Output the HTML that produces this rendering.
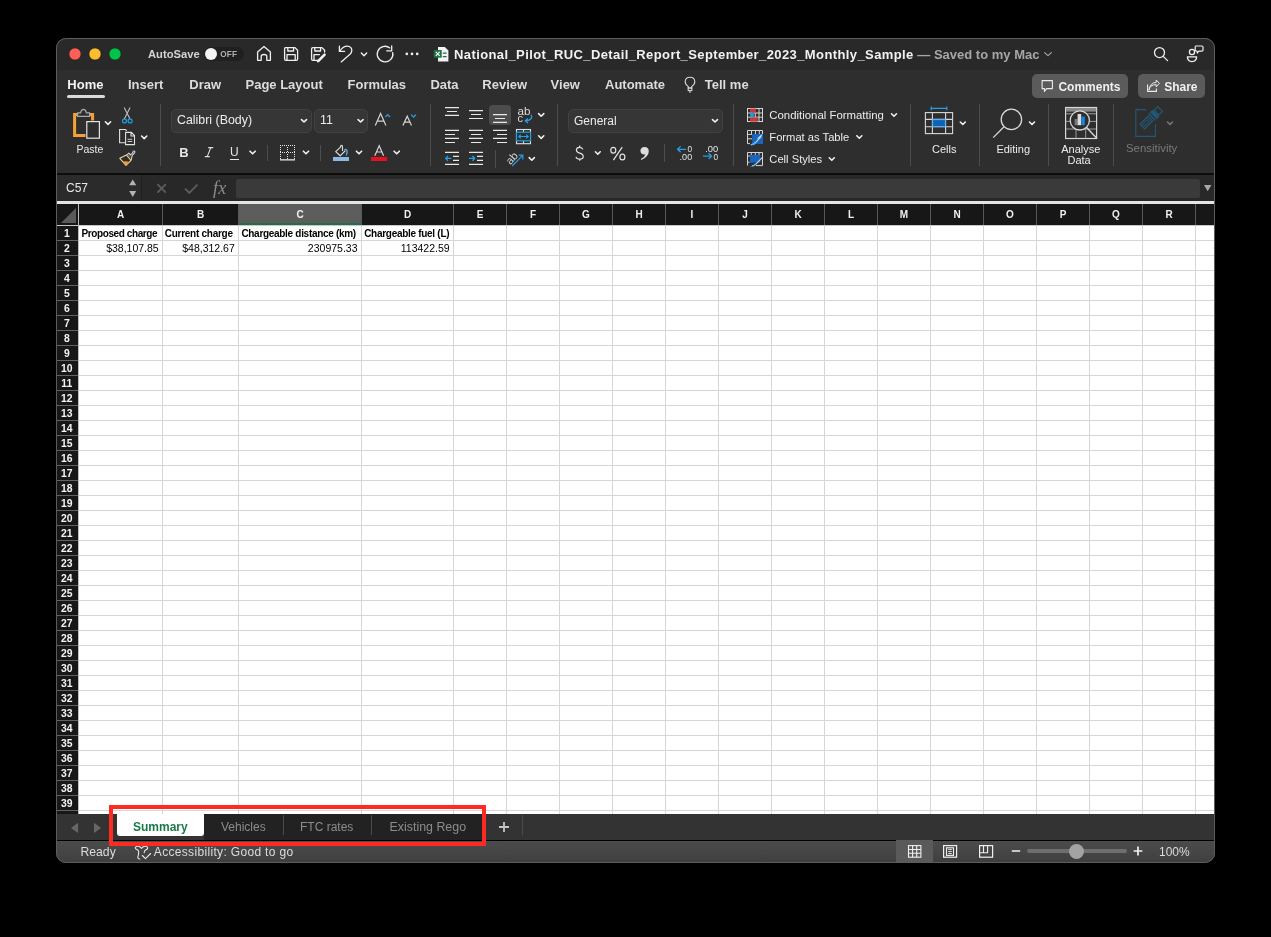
<!DOCTYPE html>
<html><head><meta charset="utf-8"><style>
*{margin:0;padding:0;box-sizing:border-box}
html,body{width:1271px;height:937px;background:#000;overflow:hidden;font-family:"Liberation Sans",sans-serif}
#win{position:absolute;left:56px;top:38px;width:1159px;height:825px;border-radius:10px;overflow:hidden;background:#2e2e2e}
#pg{will-change:transform;position:absolute;left:-56px;top:-38px;width:1271px;height:937px}
#pg div,#pg span,#pg svg{position:absolute;white-space:nowrap}
#frame{position:absolute;left:56px;top:38px;width:1159px;height:825px;border-radius:10px;border:1px solid #5c5c5c;pointer-events:none}
.titlebar{left:56px;top:38px;width:1159px;height:32px;background:#292929}
.colhdr{left:56px;top:204px;width:1159px;height:21px;background:#171717}
.ch{top:204px;height:21px;line-height:21px;text-align:center;color:#f0f0f0;font-weight:bold;font-size:10px}
.ch.sel{background:#5d5d5d;border-bottom:2px solid #1d7044}
.chsep{top:204px;width:1px;height:21px;background:#585858}
.vl{top:226px;width:1px;height:588px;background:#d6d6d6}
.hl{left:78px;width:1137px;height:1px;background:#d6d6d6}
.rh{left:56.3px;width:21px;height:14px;line-height:16.5px;text-align:center;color:#f4f4f4;font-weight:bold;font-size:10.4px}
.rhsep{left:57px;width:21px;height:1px;background:#626262}
.cellbg{left:78px;top:225px;width:1137px;height:589px;background:#fff}
.rhbg{left:56px;top:225px;width:22px;height:589px;background:#171717}
.t{color:#e6e6e6;font-size:13px;line-height:16px}

</style></head><body>
<div id="win"><div id="pg">
<div class="titlebar"></div>
<div class="t" style="left:148px;top:46px;font-size:11.2px;color:#d4d4d4;font-weight:bold;">AutoSave</div>
<div style="left:204px;top:47px;width:40px;height:14px;border-radius:7px;background:#202020"></div>
<div style="left:205px;top:47.8px;width:12px;height:12px;border-radius:6px;background:#f4f4f4"></div>
<div style="left:220.2px;top:51px;font-size:8.2px;line-height:8px;font-weight:bold;color:#b0b0b0;letter-spacing:0.2px">OFF</div>
<div style="left:454px;top:47px;font-size:13px;line-height:16px;font-weight:bold;color:#f2f2f2;letter-spacing:0.4px">National_Pilot_RUC_Detail_Report_September_2023_Monthly_Sample<span style="position:static;color:#a6a6a6;letter-spacing:0"> — Saved to my Mac</span></div>

<div style="left:56px;top:70px;width:1159px;height:103px;background:#2e2e2e"></div>
<div style="left:56px;top:173px;width:1159px;height:2px;background:#0d0d0d"></div>
<div style="left:67.3px;top:78.20px;font-size:13px;line-height:13px;font-weight:bold;color:#f2f2f2;letter-spacing:0px;">Home</div>
<div style="left:128px;top:78.20px;font-size:13px;line-height:13px;font-weight:bold;color:#dcdcdc;letter-spacing:0px;">Insert</div>
<div style="left:189.3px;top:78.20px;font-size:13px;line-height:13px;font-weight:bold;color:#dcdcdc;letter-spacing:0px;">Draw</div>
<div style="left:245.5px;top:78.20px;font-size:13px;line-height:13px;font-weight:bold;color:#dcdcdc;letter-spacing:0px;">Page Layout</div>
<div style="left:347.5px;top:78.20px;font-size:13px;line-height:13px;font-weight:bold;color:#dcdcdc;letter-spacing:0px;">Formulas</div>
<div style="left:430.4px;top:78.20px;font-size:13px;line-height:13px;font-weight:bold;color:#dcdcdc;letter-spacing:0px;">Data</div>
<div style="left:482.3px;top:78.20px;font-size:13px;line-height:13px;font-weight:bold;color:#dcdcdc;letter-spacing:0px;">Review</div>
<div style="left:550.6px;top:78.20px;font-size:13px;line-height:13px;font-weight:bold;color:#dcdcdc;letter-spacing:0px;">View</div>
<div style="left:605px;top:78.20px;font-size:13px;line-height:13px;font-weight:bold;color:#dcdcdc;letter-spacing:0px;">Automate</div>
<div style="left:704.8px;top:78.20px;font-size:13px;line-height:13px;font-weight:bold;color:#dcdcdc;letter-spacing:0px;">Tell me</div>
<div style="left:67px;top:95px;width:38px;height:3px;border-radius:1.5px;background:#dadada"></div>
<div style="left:1032px;top:74px;width:96px;height:24px;border-radius:5px;background:#5b5b5b"></div>
<div style="left:1138px;top:74px;width:67px;height:24px;border-radius:5px;background:#5b5b5b"></div>
<div style="left:1058.4px;top:80.74px;font-size:12px;line-height:12px;font-weight:bold;color:#f0f0f0;letter-spacing:0px;">Comments</div>
<div style="left:1164.2px;top:80.74px;font-size:12px;line-height:12px;font-weight:bold;color:#f0f0f0;letter-spacing:0px;">Share</div>
<div style="left:160px;top:104px;width:1px;height:62px;background:#4d4d4d"></div>
<div style="left:430px;top:104px;width:1px;height:62px;background:#4d4d4d"></div>
<div style="left:557px;top:104px;width:1px;height:62px;background:#4d4d4d"></div>
<div style="left:733px;top:104px;width:1px;height:62px;background:#4d4d4d"></div>
<div style="left:910px;top:104px;width:1px;height:62px;background:#4d4d4d"></div>
<div style="left:979px;top:104px;width:1px;height:62px;background:#4d4d4d"></div>
<div style="left:1048px;top:104px;width:1px;height:62px;background:#4d4d4d"></div>
<div style="left:1113px;top:104px;width:1px;height:62px;background:#4d4d4d"></div>
<div style="left:267px;top:145px;width:1px;height:16px;background:#4d4d4d"></div>
<div style="left:320px;top:145px;width:1px;height:16px;background:#4d4d4d"></div>
<div style="left:495px;top:150px;width:1px;height:18px;background:#4d4d4d"></div>
<div style="left:664px;top:144px;width:1px;height:18px;background:#4d4d4d"></div>
<div style="left:171px;top:109px;width:141px;height:24px;border-radius:5px;background:#363636;border:1px solid #414141"></div>
<div style="left:314px;top:109px;width:54px;height:24px;border-radius:5px;background:#363636;border:1px solid #414141"></div>
<div style="left:568px;top:109px;width:155px;height:24px;border-radius:5px;background:#363636;border:1px solid #414141"></div>
<div style="left:177px;top:114.40px;font-size:12.4px;line-height:12.4px;font-weight:normal;color:#ececec;letter-spacing:0px;">Calibri (Body)</div>
<div style="left:320px;top:114.40px;font-size:12.4px;line-height:12.4px;font-weight:normal;color:#ececec;letter-spacing:0px;">11</div>
<div style="left:574px;top:114.74px;font-size:12px;line-height:12px;font-weight:normal;color:#ececec;letter-spacing:0px;">General</div>
<div style="left:76.5px;top:143.81px;font-size:10.5px;line-height:10.5px;font-weight:normal;color:#e8e8e8;letter-spacing:0px;">Paste</div>
<div style="left:769.3px;top:109.55px;font-size:11.4px;line-height:11.4px;font-weight:normal;color:#ececec;letter-spacing:0px;">Conditional Formatting</div>
<div style="left:769.3px;top:131.72px;font-size:11.2px;line-height:11.2px;font-weight:normal;color:#ececec;letter-spacing:0px;">Format as Table</div>
<div style="left:769.3px;top:153.52px;font-size:11.2px;line-height:11.2px;font-weight:normal;color:#ececec;letter-spacing:0px;">Cell Styles</div>
<div style="left:932px;top:143.79px;font-size:11px;line-height:11px;font-weight:normal;color:#ececec;letter-spacing:0px;">Cells</div>
<div style="left:996.4px;top:143.79px;font-size:11px;line-height:11px;font-weight:normal;color:#ececec;letter-spacing:0px;">Editing</div>
<div style="left:1061.2px;top:143.79px;font-size:11px;line-height:11px;font-weight:normal;color:#ececec;letter-spacing:0px;">Analyse</div>
<div style="left:1067.5px;top:155.39px;font-size:11px;line-height:11px;font-weight:normal;color:#ececec;letter-spacing:0px;">Data</div>
<div style="left:1126px;top:143.45px;font-size:11.4px;line-height:11.4px;font-weight:normal;color:#7a7a7a;letter-spacing:0px;">Sensitivity</div>
<div style="left:179.2px;top:145.80px;font-size:13px;line-height:13px;font-weight:bold;color:#e6e6e6;letter-spacing:0px;">B</div>
<div style="left:230px;top:146.44px;font-size:12px;line-height:12px;font-weight:normal;color:#e6e6e6;letter-spacing:0px;">U</div>
<div style="left:230px;top:158.5px;width:9px;height:1px;background:#e6e6e6"></div>
<div style="left:56px;top:175px;width:1159px;height:26px;background:#282828"></div>
<div style="left:56px;top:175px;width:86px;height:26px;background:#2b2b2b"></div>
<div style="left:141px;top:175px;width:1px;height:26px;background:#1f1f1f"></div>
<div style="left:66px;top:181px;font-size:12px;line-height:14px;color:#e8e8e8">C57</div>
<div style="left:236px;top:179px;width:964px;height:19px;border-radius:2px;background:#3a3a3a"></div>
<div style="left:56px;top:201px;width:1159px;height:3px;background:#e4e4e4"></div>
<div style="left:213px;top:177.5px;font:italic 18px/20px 'Liberation Serif',serif;color:#8c8c8c;letter-spacing:0.3px">fx</div>

<div class="cellbg"></div><div class="rhbg"></div><div class="colhdr"></div>
<div class="ch" style="left:79px;width:83px">A</div>
<div class="chsep" style="left:78px"></div>
<div class="ch" style="left:163px;width:75px">B</div>
<div class="chsep" style="left:162px"></div>
<div class="ch sel" style="left:239px;width:122px">C</div>
<div class="chsep" style="left:238px"></div>
<div class="ch" style="left:362px;width:91px">D</div>
<div class="chsep" style="left:361px"></div>
<div class="ch" style="left:454px;width:52px">E</div>
<div class="chsep" style="left:453px"></div>
<div class="ch" style="left:507px;width:52px">F</div>
<div class="chsep" style="left:506px"></div>
<div class="ch" style="left:560px;width:52px">G</div>
<div class="chsep" style="left:559px"></div>
<div class="ch" style="left:613px;width:52px">H</div>
<div class="chsep" style="left:612px"></div>
<div class="ch" style="left:666px;width:52px">I</div>
<div class="chsep" style="left:665px"></div>
<div class="ch" style="left:719px;width:52px">J</div>
<div class="chsep" style="left:718px"></div>
<div class="ch" style="left:772px;width:52px">K</div>
<div class="chsep" style="left:771px"></div>
<div class="ch" style="left:825px;width:52px">L</div>
<div class="chsep" style="left:824px"></div>
<div class="ch" style="left:878px;width:52px">M</div>
<div class="chsep" style="left:877px"></div>
<div class="ch" style="left:931px;width:52px">N</div>
<div class="chsep" style="left:930px"></div>
<div class="ch" style="left:984px;width:52px">O</div>
<div class="chsep" style="left:983px"></div>
<div class="ch" style="left:1037px;width:52px">P</div>
<div class="chsep" style="left:1036px"></div>
<div class="ch" style="left:1090px;width:52px">Q</div>
<div class="chsep" style="left:1089px"></div>
<div class="ch" style="left:1143px;width:52px">R</div>
<div class="chsep" style="left:1142px"></div>
<div class="ch" style="left:1196px;width:52px">S</div>
<div class="chsep" style="left:1195px"></div>
<div class="vl" style="left:162px"></div>
<div class="vl" style="left:238px"></div>
<div class="vl" style="left:361px"></div>
<div class="vl" style="left:453px"></div>
<div class="vl" style="left:506px"></div>
<div class="vl" style="left:559px"></div>
<div class="vl" style="left:612px"></div>
<div class="vl" style="left:665px"></div>
<div class="vl" style="left:718px"></div>
<div class="vl" style="left:771px"></div>
<div class="vl" style="left:824px"></div>
<div class="vl" style="left:877px"></div>
<div class="vl" style="left:930px"></div>
<div class="vl" style="left:983px"></div>
<div class="vl" style="left:1036px"></div>
<div class="vl" style="left:1089px"></div>
<div class="vl" style="left:1142px"></div>
<div class="vl" style="left:1195px"></div>
<div class="hl" style="top:225px"></div>
<div class="hl" style="top:240px"></div>
<div class="hl" style="top:255px"></div>
<div class="hl" style="top:270px"></div>
<div class="hl" style="top:285px"></div>
<div class="hl" style="top:300px"></div>
<div class="hl" style="top:315px"></div>
<div class="hl" style="top:330px"></div>
<div class="hl" style="top:345px"></div>
<div class="hl" style="top:360px"></div>
<div class="hl" style="top:375px"></div>
<div class="hl" style="top:390px"></div>
<div class="hl" style="top:405px"></div>
<div class="hl" style="top:420px"></div>
<div class="hl" style="top:435px"></div>
<div class="hl" style="top:450px"></div>
<div class="hl" style="top:465px"></div>
<div class="hl" style="top:480px"></div>
<div class="hl" style="top:495px"></div>
<div class="hl" style="top:510px"></div>
<div class="hl" style="top:525px"></div>
<div class="hl" style="top:540px"></div>
<div class="hl" style="top:555px"></div>
<div class="hl" style="top:570px"></div>
<div class="hl" style="top:585px"></div>
<div class="hl" style="top:600px"></div>
<div class="hl" style="top:615px"></div>
<div class="hl" style="top:630px"></div>
<div class="hl" style="top:645px"></div>
<div class="hl" style="top:660px"></div>
<div class="hl" style="top:675px"></div>
<div class="hl" style="top:690px"></div>
<div class="hl" style="top:705px"></div>
<div class="hl" style="top:720px"></div>
<div class="hl" style="top:735px"></div>
<div class="hl" style="top:750px"></div>
<div class="hl" style="top:765px"></div>
<div class="hl" style="top:780px"></div>
<div class="hl" style="top:795px"></div>
<div class="hl" style="top:810px"></div>
<div class="rh" style="top:226px">1</div>
<div class="rhsep" style="top:240px"></div>
<div class="rh" style="top:241px">2</div>
<div class="rhsep" style="top:255px"></div>
<div class="rh" style="top:256px">3</div>
<div class="rhsep" style="top:270px"></div>
<div class="rh" style="top:271px">4</div>
<div class="rhsep" style="top:285px"></div>
<div class="rh" style="top:286px">5</div>
<div class="rhsep" style="top:300px"></div>
<div class="rh" style="top:301px">6</div>
<div class="rhsep" style="top:315px"></div>
<div class="rh" style="top:316px">7</div>
<div class="rhsep" style="top:330px"></div>
<div class="rh" style="top:331px">8</div>
<div class="rhsep" style="top:345px"></div>
<div class="rh" style="top:346px">9</div>
<div class="rhsep" style="top:360px"></div>
<div class="rh" style="top:361px">10</div>
<div class="rhsep" style="top:375px"></div>
<div class="rh" style="top:376px">11</div>
<div class="rhsep" style="top:390px"></div>
<div class="rh" style="top:391px">12</div>
<div class="rhsep" style="top:405px"></div>
<div class="rh" style="top:406px">13</div>
<div class="rhsep" style="top:420px"></div>
<div class="rh" style="top:421px">14</div>
<div class="rhsep" style="top:435px"></div>
<div class="rh" style="top:436px">15</div>
<div class="rhsep" style="top:450px"></div>
<div class="rh" style="top:451px">16</div>
<div class="rhsep" style="top:465px"></div>
<div class="rh" style="top:466px">17</div>
<div class="rhsep" style="top:480px"></div>
<div class="rh" style="top:481px">18</div>
<div class="rhsep" style="top:495px"></div>
<div class="rh" style="top:496px">19</div>
<div class="rhsep" style="top:510px"></div>
<div class="rh" style="top:511px">20</div>
<div class="rhsep" style="top:525px"></div>
<div class="rh" style="top:526px">21</div>
<div class="rhsep" style="top:540px"></div>
<div class="rh" style="top:541px">22</div>
<div class="rhsep" style="top:555px"></div>
<div class="rh" style="top:556px">23</div>
<div class="rhsep" style="top:570px"></div>
<div class="rh" style="top:571px">24</div>
<div class="rhsep" style="top:585px"></div>
<div class="rh" style="top:586px">25</div>
<div class="rhsep" style="top:600px"></div>
<div class="rh" style="top:601px">26</div>
<div class="rhsep" style="top:615px"></div>
<div class="rh" style="top:616px">27</div>
<div class="rhsep" style="top:630px"></div>
<div class="rh" style="top:631px">28</div>
<div class="rhsep" style="top:645px"></div>
<div class="rh" style="top:646px">29</div>
<div class="rhsep" style="top:660px"></div>
<div class="rh" style="top:661px">30</div>
<div class="rhsep" style="top:675px"></div>
<div class="rh" style="top:676px">31</div>
<div class="rhsep" style="top:690px"></div>
<div class="rh" style="top:691px">32</div>
<div class="rhsep" style="top:705px"></div>
<div class="rh" style="top:706px">33</div>
<div class="rhsep" style="top:720px"></div>
<div class="rh" style="top:721px">34</div>
<div class="rhsep" style="top:735px"></div>
<div class="rh" style="top:736px">35</div>
<div class="rhsep" style="top:750px"></div>
<div class="rh" style="top:751px">36</div>
<div class="rhsep" style="top:765px"></div>
<div class="rh" style="top:766px">37</div>
<div class="rhsep" style="top:780px"></div>
<div class="rh" style="top:781px">38</div>
<div class="rhsep" style="top:795px"></div>
<div class="rh" style="top:796px">39</div>
<div class="rhsep" style="top:810px"></div>
<div style="left:56px;top:225px;width:1159px;height:1px;background:#c8c8c8"></div>
<div style="left:78px;top:204px;width:1px;height:610px;background:#bdbdbd"></div>
<div style="left:81.5px;top:228.53px;font-size:10px;line-height:10px;font-weight:bold;color:#000;letter-spacing:-0.4px;">Proposed charge</div>
<div style="left:164.7px;top:228.53px;font-size:10px;line-height:10px;font-weight:bold;color:#000;letter-spacing:-0.26px;">Current charge</div>
<div style="left:241.4px;top:228.53px;font-size:10px;line-height:10px;font-weight:bold;color:#000;letter-spacing:-0.3px;">Chargeable distance (km)</div>
<div style="left:364.2px;top:228.53px;font-size:10px;line-height:10px;font-weight:bold;color:#000;letter-spacing:-0.29px;">Chargeable fuel (L)</div>
<div style="right:1112.3px;top:242.91px;font-size:10.5px;line-height:10.5px;font-weight:normal;color:#000;letter-spacing:0px">$38,107.85</div>
<div style="right:1036.2px;top:242.91px;font-size:10.5px;line-height:10.5px;font-weight:normal;color:#000;letter-spacing:0px">$48,312.67</div>
<div style="right:913.5px;top:242.91px;font-size:10.5px;line-height:10.5px;font-weight:normal;color:#000;letter-spacing:0px">230975.33</div>
<div style="right:821.4px;top:242.91px;font-size:10.5px;line-height:10.5px;font-weight:normal;color:#000;letter-spacing:0px">113422.59</div>
<div style="left:56px;top:814px;width:1159px;height:26px;background:#333333"></div>
<div style="left:204px;top:814px;width:282px;height:26px;background:#222222"></div>
<div style="left:117px;top:814px;width:87px;height:22px;background:#ffffff;border-radius:0 0 3px 3px"></div>
<div style="left:56px;top:840px;width:1159px;height:1px;background:#000"></div>
<div style="left:56px;top:841px;width:1159px;height:22px;background:linear-gradient(#505050 0,#4a4a4a 1px,#464646 50%,#3e3e3e 100%)"></div>
<div style="left:133px;top:819.5px;font-size:12px;line-height:14px;font-weight:bold;color:#1a7a46">Summary</div>
<div style="left:221px;top:819.5px;font-size:12px;line-height:14px;color:#8c8c8c">Vehicles</div>
<div style="left:300px;top:819.5px;font-size:12px;line-height:14px;color:#8c8c8c">FTC rates</div>
<div style="left:389.6px;top:819.5px;font-size:12.4px;line-height:14px;color:#8c8c8c">Existing Rego</div>
<div style="left:283px;top:815px;width:1px;height:20px;background:#4a4a4a"></div>
<div style="left:371px;top:815px;width:1px;height:20px;background:#4a4a4a"></div>
<div style="left:522px;top:815px;width:1px;height:20px;background:#4a4a4a"></div>
<div style="left:80.5px;top:845px;font-size:12.2px;line-height:14px;color:#dcdcdc">Ready</div>
<div style="left:153.8px;top:845px;font-size:12px;line-height:14px;color:#dcdcdc;letter-spacing:0.33px">Accessibility: Good to go</div>
<div style="left:896px;top:840px;width:37px;height:22px;background:#5a5a5a"></div>
<div style="left:1159px;top:845px;font-size:12px;line-height:14px;color:#dcdcdc">100%</div>
<div style="left:1027px;top:849px;width:100px;height:4px;border-radius:2px;background:#6e6e6e"></div>
<div style="left:1069px;top:843.5px;width:15px;height:15px;border-radius:8px;background:#a3a3a3"></div>

<svg id="ico" width="1271" height="937" viewBox="0 0 1271 937" style="left:0;top:0">
<g id="traffic">
<circle cx="75" cy="54" r="6" fill="#ff5f57" stroke="#1a1a1a" stroke-width="0.5"/>
<circle cx="95" cy="54" r="6" fill="#febc2e" stroke="#1a1a1a" stroke-width="0.5"/>
<circle cx="115" cy="54" r="6" fill="#00c34a" stroke="#1a1a1a" stroke-width="0.5"/>
</g>
<g fill="none" stroke="#f0f0f0" stroke-width="1.3" stroke-linejoin="round" stroke-linecap="round">
<!-- home -->
<path d="M257.6 60.3 V52 L264 46.6 L270.4 52 V60.3 H266.8 V56.5 Q266.8 54.5 264 54.5 Q261.2 54.5 261.2 56.5 V60.3 Z"/>
<!-- save -->
<path d="M285.5 47.6 H295 L297.6 50.2 V59 Q297.6 60.4 296.2 60.4 H285.9 Q284.6 60.4 284.6 59 V48.9 Q284.6 47.6 285.5 47.6 Z"/>
<path d="M287.8 47.8 V51 H293.6 V47.8"/>
<path d="M287 60.2 V54.6 H295.2 V60.2"/>
<!-- save as -->
<path d="M318 60.4 H312.9 Q311.6 60.4 311.6 59 V48.9 Q311.6 47.6 312.9 47.6 H322 L324.6 50.2 V52"/>
<path d="M314.8 47.8 V51 H320.6 V47.8"/>
<path d="M314 60.2 V54.6 H319.5"/>
<path d="M318.2 61.2 L324.6 54.6" stroke-width="2.6"/>
<!-- undo -->
<path d="M339.4 46.2 V51.4 H344.6"/>
<path d="M339.7 51.1 Q343.4 46.1 347.2 46.2 Q351.8 46.5 351.8 50.6 Q351.7 52.6 350 54.2 L341.2 61.9"/>
<path d="M361.3 52.9 L364 55.7 L366.7 52.9" stroke-width="1.4"/>
<!-- redo -->
<path d="M389.8 47.9 A7.8 7.8 0 1 0 392.7 52.6"/>
<path d="M386.7 50.8 H391.7 V45.8"/>
<!-- search -->
<circle cx="1159.5" cy="52.6" r="5"/>
<path d="M1163.2 56.4 L1167.6 60.6"/>
<!-- title chevron -->
<path d="M1044.6 52.6 L1048 55.6 L1051.4 52.6" stroke="#a6a6a6" stroke-width="1.2"/>
<!-- people/share -->
<circle cx="1192" cy="52" r="2.6"/>
<path d="M1187.4 56.8 H1196.6 Q1196.6 61.6 1192 61.6 Q1187.4 61.6 1187.4 56.8 Z"/>
<path d="M1195.8 46 H1201.8 Q1203 46 1203 47.2 V50 Q1203 51.2 1201.8 51.2 H1198.8 L1197.4 53 L1197 51.2 Q1195.2 51.2 1195.2 50 V47.2 Q1195.2 46 1195.8 46 Z" stroke-width="1.2"/>
</g>
<g fill="#f0f0f0">
<circle cx="406.8" cy="53.9" r="1.3"/><circle cx="412" cy="53.9" r="1.3"/><circle cx="417.2" cy="53.9" r="1.3"/>
</g>
<!-- excel icon -->
<g>
<path d="M438 46.9 H444.8 L448.4 50.5 V61.4 H438 Z" fill="#f4f4f4"/>
<path d="M442.8 53.2 H446.6 M442.8 56.6 H446.6" stroke="#1d7345" stroke-width="1.2"/>
<rect x="433.8" y="50" width="7.9" height="7.7" fill="#1d7345"/>
<path d="M435.8 51.9 L439.7 55.8 M439.7 51.9 L435.8 55.8" stroke="#fff" stroke-width="1.1"/>
</g>

<!-- clipboard -->
<path d="M80 114.6 H74.6 V135.4 H85.5" fill="none" stroke="#f4a236" stroke-width="3"/>
<path d="M87.6 114.6 H92.6 V120.5" fill="none" stroke="#f4a236" stroke-width="3"/>
<path d="M77.6 116.3 V112.8 H80.6 Q81.2 109.4 83.5 109.4 Q85.8 109.4 86.4 112.8 H89.6 V116.3 Z" fill="#2e2e2e" stroke="#a9a9a9" stroke-width="1.2"/>
<rect x="86.8" y="121.6" width="12.6" height="16.6" fill="#2e2e2e" stroke="#e4e4e4" stroke-width="1.2"/>
<!-- scissors -->
<path d="M124.2 107.4 L130 119 M130.1 107.4 L124.3 119" fill="none" stroke="#bdbdbd" stroke-width="1.1"/>
<rect x="122.6" y="119.2" width="3.8" height="3.6" rx="1.2" fill="none" stroke="#1c9fe3" stroke-width="1.3"/>
<rect x="128.2" y="119.2" width="3.8" height="3.6" rx="1.2" fill="none" stroke="#1c9fe3" stroke-width="1.3"/>
<!-- copy -->
<path d="M125 142.8 H119.6 V129.5 H125.5 L126.8 130.8" fill="none" stroke="#e0e0e0" stroke-width="1.1"/>
<path d="M125.6 144.6 V132.4 H131.4 L134.5 135.5 V144.6 Z M131 132.6 V136 H134.4" fill="none" stroke="#e0e0e0" stroke-width="1.1"/>
<path d="M127.6 139.3 H132.2 M127.6 141.5 H132.2" stroke="#e0e0e0" stroke-width="0.9"/>
<!-- format painter -->
<path d="M119.8 158.3 L126.4 155 L131 160.4 L126 165.3 Z" fill="none" stroke="#f6d58c" stroke-width="1.1" stroke-linejoin="round"/>
<path d="M122.8 161.6 Q126.4 160.8 129.6 162 L126 165.1 Z" fill="#ee982c"/>
<path d="M126.6 155.2 L128.8 153.2 L130.6 155 L133 152.4 Q132.6 150.8 134.2 151 Q135.4 151.6 134.6 152.8 L132.2 155.4 L131.2 160.2" fill="none" stroke="#d4d4d4" stroke-width="1.1" stroke-linejoin="round"/>
<path d="M128.4 155.4 L130.4 157.6" stroke="#d4d4d4" stroke-width="0.9" stroke-dasharray="0.9 0.7"/>
<!-- chevrons (ribbon) -->
<g fill="none" stroke="#f0f0f0" stroke-width="1.6" stroke-linecap="round" stroke-linejoin="round">
<path d="M105.4 121.8 L108 124.4 L110.6 121.8"/>
<path d="M141.6 136 L144.2 138.6 L146.8 136"/>
<path d="M301.5 119.6 L304 122 L306.5 119.6"/>
<path d="M358.1 119.6 L360.6 122 L363.1 119.6"/>
<path d="M712.5 119.6 L715 122 L717.5 119.6"/>
<path d="M250 151.2 L252.6 153.8 L255.2 151.2"/>
<path d="M303.4 151.2 L306 153.8 L308.6 151.2"/>
<path d="M356.4 151.2 L359 153.8 L361.6 151.2"/>
<path d="M394.1 151.2 L396.7 153.8 L399.3 151.2"/>
<path d="M538.6 113.6 L541.2 116.2 L543.8 113.6"/>
<path d="M538.6 135.8 L541.2 138.4 L543.8 135.8"/>
<path d="M529.2 157.6 L531.8 160.2 L534.4 157.6"/>
<path d="M595.4 151.8 L597.8 154.2 L600.2 151.8"/>
<path d="M891.5 113.8 L894 116.3 L896.5 113.8"/>
<path d="M856.8 135.8 L859.3 138.3 L861.8 135.8"/>
<path d="M829.3 157.8 L831.8 160.3 L834.3 157.8"/>
<path d="M960.3 122 L962.8 124.5 L965.3 122"/>
<path d="M1029.5 122 L1032 124.5 L1034.5 122"/>
<path d="M1167.5 122 L1170 124.5 L1172.5 122" stroke="#777"/>
</g>

<!-- grow/shrink font -->
<g fill="none" stroke="#d4d4d4" stroke-width="1.2" stroke-linejoin="miter">
<path d="M375.3 125.6 L380.6 113.6 L385.9 125.6 M377.3 121.2 H383.9"/>
<path d="M402.9 125.6 L407.2 116.2 L411.5 125.6 M404.5 122.2 H409.9"/>
<!-- font color A -->
<path d="M374.8 155.8 L379.2 145.8 L383.6 155.8 M376.5 152 H381.9"/>
</g>
<g fill="none" stroke="#22a0e4" stroke-width="1.3">
<path d="M385.4 117 L387.7 114.6 L390 117"/>
<path d="M411.2 114.6 L413.6 117 L416 114.6"/>
</g>
<rect x="371" y="157" width="16" height="4" fill="#e8101e"/>
<rect x="333" y="157" width="16" height="4" fill="#8cbae8"/>
<!-- fill bucket -->
<path d="M342.5 150.4 V147.1 Q342.5 145.4 341.5 145.4 Q340.5 145.4 340.5 147.1 L335.7 151.6 L340.2 155.8 L345 151" fill="none" stroke="#d8d8d8" stroke-width="1.2" stroke-linejoin="round" stroke-linecap="round"/>
<path d="M344.8 149.5 Q346.8 148.8 347.1 151.4 Q347.2 153.4 346.4 155" fill="none" stroke="#5ab0ea" stroke-width="1.3" stroke-linecap="round"/>
<!-- borders -->
<g fill="#e6e6e6">
<path d="M280 145 h1v1h-1z M282 145 h1v1h-1z M284 145 h1v1h-1z M286 145 h1v1h-1z M288 145 h1v1h-1z M290 145 h1v1h-1z M292 145 h1v1h-1z M294 145 h1v1h-1z"/>
<path d="M280 152 h1v1h-1z M282 152 h1v1h-1z M284 152 h1v1h-1z M286 152 h1v1h-1z M288 152 h1v1h-1z M290 152 h1v1h-1z M292 152 h1v1h-1z M294 152 h1v1h-1z"/>
<path d="M280 147 h1v1h-1z M280 149 h1v1h-1z M280 151 h1v1h-1z M280 154 h1v1h-1z M280 156 h1v1h-1z M280 158 h1v1h-1z"/>
<path d="M294 147 h1v1h-1z M294 149 h1v1h-1z M294 151 h1v1h-1z M294 154 h1v1h-1z M294 156 h1v1h-1z M294 158 h1v1h-1z"/>
<path d="M287 147 h1v1h-1z M287 149 h1v1h-1z M287 151 h1v1h-1z M287 154 h1v1h-1z M287 156 h1v1h-1z M287 158 h1v1h-1z"/>
<rect x="280" y="159.2" width="15" height="1.3"/>
</g>
<!-- alignment -->
<rect x="489" y="105" width="22" height="20" rx="3.5" fill="#4c4c4c"/>
<g stroke="#e8e8e8" stroke-width="1.2" fill="none">
<path d="M445 107.6 H459 M447 111.5 H457 M445 115.4 H459"/>
<path d="M469 110.6 H483 M471 114.5 H481 M469 118.5 H483"/>
<path d="M493 114.6 H507 M495 118.5 H505 M493 122.4 H507"/>
<path d="M445 130.4 H459 M445 134.5 H455 M445 138.4 H459 M445 142.5 H455"/>
<path d="M469 130.4 H483 M471 134.5 H481 M469 138.4 H483 M471 142.5 H481"/>
<path d="M493 130.4 H507 M497 134.5 H507 M493 138.4 H507 M497 142.5 H507"/>
<path d="M445 152.3 H459 M453 156.4 H459 M453 160.4 H459 M445 164.4 H459"/>
<path d="M469 152.3 H483 M477 156.4 H483 M477 160.4 H483 M469 164.4 H483"/>
</g>
<g stroke="#22a0e4" stroke-width="1.3" fill="none" stroke-linejoin="round">
<path d="M445.6 158.4 H451.4 M448 156 L445.6 158.4 L448 160.8"/>
<path d="M469 158.4 H474.8 M472.4 156 L474.8 158.4 L472.4 160.8"/>
</g>
<!-- wrap text -->
<text x="517.6" y="115" font-family="Liberation Sans" font-size="11" fill="#dcdcdc" textLength="13" lengthAdjust="spacingAndGlyphs">ab</text>
<text x="517.6" y="122.4" font-family="Liberation Sans" font-size="11" fill="#dcdcdc">c</text>
<path d="M531.2 114.8 Q533.4 119.6 526 120.8 M528 118.4 L525.2 120.8 L528 123" fill="none" stroke="#22a0e4" stroke-width="1.3" stroke-linejoin="round"/>
<!-- merge -->
<rect x="516.5" y="129.5" width="14" height="14.2" fill="none" stroke="#e0e0e0" stroke-width="1.1"/>
<path d="M523.5 129.5 V132.2 M523.5 140.8 V143.6" stroke="#e0e0e0" stroke-width="1.1"/>
<rect x="516.5" y="132.2" width="14" height="8.6" fill="#2e2e2e" stroke="#22a0e4" stroke-width="1.2"/>
<path d="M519 136.5 H528 M520.8 134.6 L518.8 136.5 L520.8 138.4 M526.2 134.6 L528.2 136.5 L526.2 138.4" fill="none" stroke="#22a0e4" stroke-width="1.2"/>
<!-- orientation -->
<text x="0" y="0" font-family="Liberation Sans" font-size="11" fill="#d6d6d6" transform="translate(510.4 165.2) rotate(-48)">ab</text>
<path d="M512.2 166 L522.6 155.4 M518.6 155.2 H522.8 V159.4" fill="none" stroke="#22a0e4" stroke-width="1.2"/>
<!-- number -->
<g fill="none" stroke="#22a0e4" stroke-width="1.3" stroke-linejoin="round">
<path d="M677.6 149.3 H686 M680.6 146.4 L677.6 149.3 L680.6 152.2"/>
<path d="M703 156.2 H711.6 M708.6 153.3 L711.6 156.2 L708.6 159.1"/>
</g>
<g font-family="Liberation Sans" font-size="9.3" fill="#e4e4e4">
<text x="687.6" y="151.8" textLength="4.6" lengthAdjust="spacingAndGlyphs">0</text>
<text x="679.6" y="160.1" textLength="12.6" lengthAdjust="spacingAndGlyphs">.00</text>
<text x="705.2" y="151.8" textLength="13" lengthAdjust="spacingAndGlyphs">.00</text>
<text x="713.6" y="160.1" textLength="4.6" lengthAdjust="spacingAndGlyphs">0</text>
</g>
<path d="M644.6 146.9 Q648.8 146.9 648.8 151.4 Q648.6 156.6 641.4 159.9 L640.8 158.9 Q644.8 156.6 645.4 154.4 Q640.4 154.8 640.4 150.8 Q640.6 146.9 644.6 146.9 Z" fill="#dcdcdc"/>

<!-- conditional formatting -->
<g fill="none" stroke="#d4d4d4" stroke-width="1">
<rect x="747.5" y="108.5" width="15" height="13"/>
<path d="M751.3 108.5 V121.5 M755.3 108.5 V121.5 M759 108.5 V121.5 M747.5 113 H762.5 M747.5 117.2 H762.5"/>
</g>
<rect x="750" y="108.6" width="6" height="4" fill="#c8363e"/>
<rect x="750" y="117.4" width="7.8" height="4.2" fill="#c8363e"/>
<rect x="750.2" y="112.8" width="3.6" height="4.4" fill="#1a9ee0"/>
<!-- format as table -->
<g fill="none" stroke="#d4d4d4" stroke-width="1">
<path d="M762.5 130.5 H747.5 V143.6 H750 M747.5 134.4 H752 M747.5 138.8 H752 M751.5 130.5 V134 M755.5 130.5 V134 M759.3 130.5 V134 M762.5 130.5 V134.5"/>
</g>
<rect x="752.2" y="134" width="10.8" height="10" fill="#1766c2"/>
<path d="M757.6 138.6 L762 134.6 M751 144.6 Q753.6 144.8 755.4 142.6 L761.4 136.4" fill="none" stroke="#cfd8e0" stroke-width="1.1"/>
<path d="M749.6 144.8 Q753 145 754.8 141.8 L756 143 Q754 146.2 749.6 144.8 Z" fill="#4fb3ea"/>
<!-- cell styles -->
<g fill="none" stroke="#d4d4d4" stroke-width="1">
<path d="M747.5 165.6 V152.5 H762.5 V165.6 H756 M747.5 156 H750 M747.5 162.2 H749.6 M751.3 152.5 V155 M755.3 152.5 V155 M759 152.5 V155"/>
</g>
<rect x="750" y="155" width="10.3" height="7.6" fill="#1766c2"/>
<path d="M752 165.8 Q754.6 166 756.4 163.6 L762.6 157.2" fill="none" stroke="#cfd8e0" stroke-width="1.1"/>
<path d="M749.6 166.4 Q753 166.6 754.8 163.4 L756 164.6 Q754 167.8 749.6 166.4 Z" fill="#4fb3ea"/>
<!-- cells -->
<g fill="none" stroke="#d8d8d8" stroke-width="1.1">
<rect x="925.4" y="112.6" width="27.2" height="21"/>
<path d="M932.4 112.6 V133.6 M945.6 112.6 V133.6 M925.4 119.4 H952.6 M925.4 126.8 H952.6"/>
</g>
<rect x="932.6" y="119.6" width="12.8" height="7" fill="#0b63b8" stroke="#5cb4ee" stroke-width="1"/>
<path d="M931.2 108.3 H946.8 M931.2 106.4 V110.2 M946.8 106.4 V110.2" stroke="#22a0e4" stroke-width="1.2" fill="none"/>
<!-- editing -->
<circle cx="1011.4" cy="119.4" r="10.2" fill="none" stroke="#d8d8d8" stroke-width="1.3"/>
<path d="M1004 126.8 L993.2 137.6" stroke="#d8d8d8" stroke-width="1.3"/>
<!-- analyse data -->
<rect x="1065.6" y="107.5" width="31" height="31" fill="none" stroke="#d8d8d8" stroke-width="1.2"/>
<rect x="1066" y="108" width="30.2" height="3.6" fill="#8a8a8a"/>
<path d="M1066 113.8 H1096 M1066 121.4 H1096 M1066 129 H1096 M1076 111.6 V138.4 M1085.7 111.6 V138.4" stroke="#9a9a9a" stroke-width="1" fill="none"/>
<circle cx="1079.8" cy="120.4" r="9.6" fill="#2e2e2e" stroke="#d8d8d8" stroke-width="1.3"/>
<rect x="1074.6" y="119" width="3" height="6.2" fill="#7a7a7a"/>
<rect x="1077.6" y="114" width="3.6" height="11.2" fill="#dcdcdc"/>
<rect x="1081.4" y="116.6" width="3.4" height="8.6" fill="#1a86dc"/>
<path d="M1086.6 127.6 L1097 138.4" stroke="#d8d8d8" stroke-width="1.4"/>
<!-- sensitivity -->
<path d="M1146 109.6 H1135.8 V136.4 H1155.4 V124" fill="none" stroke="#225875" stroke-width="1.1"/>
<g transform="translate(1150.6 118.4) rotate(-45) scale(1.1)">
<rect x="-10.5" y="-3" width="10" height="6" fill="none" stroke="#225875" stroke-width="1.2"/>
<rect x="-8.6" y="-1.2" width="6.2" height="2.4" fill="none" stroke="#225875" stroke-width="0.9"/>
<rect x="1" y="-4.4" width="6" height="8.8" fill="#225875"/>
<rect x="2.4" y="-4.4" width="1" height="8.8" fill="#2e2e2e"/>
<rect x="7.6" y="-3" width="4.6" height="6" fill="none" stroke="#225875" stroke-width="1.1"/>
</g>

<g fill="none" stroke="#e4e4e4" stroke-width="1.2">
<path d="M582.9 149.4 Q582.2 147.3 579.6 147.3 Q576.4 147.3 576.4 150.1 Q576.4 152.4 579.6 153.1 Q583.2 153.9 583.2 156.5 Q583.2 159.1 579.6 159.1 Q576.6 159.1 576 156.8"/>
<path d="M579.7 145.6 V147.3 M579.7 159.1 V160.7"/>
<ellipse cx="613.3" cy="150.2" rx="2.5" ry="2.9"/>
<ellipse cx="622.4" cy="157" rx="2.5" ry="2.9"/>
<path d="M622.2 147.2 L613.4 160.2"/>
</g>
<!-- bulb -->
<g fill="none" stroke="#d8d8d8" stroke-width="1.1">
<path d="M688.2 88 V86.4 Q685.2 84.6 685.2 81.8 Q685.2 77.2 690 77.2 Q694.8 77.2 694.8 81.8 Q694.8 84.6 691.8 86.4 V88 Z"/>
<rect x="688.2" y="88" width="3.6" height="2.6"/>
<path d="M689 92 H691"/>
</g>
<!-- comments icon -->
<path d="M1042.1 80.6 H1052.4 V88.6 H1046.6 L1044.4 91.4 V88.6 H1042.1 Z" fill="none" stroke="#ececec" stroke-width="1.1" stroke-linejoin="round"/>
<!-- share icon -->
<path d="M1147.6 84.6 V91.4 H1156.4 V88.6" fill="none" stroke="#ececec" stroke-width="1.1"/>
<path d="M1149 90 Q1149.6 84.8 1156.2 84.6 V86.8 L1159.4 83.3 L1156.2 80 V82.4 Q1150.2 82.6 1149 90 Z" fill="none" stroke="#ececec" stroke-width="1" stroke-linejoin="round"/>
<!-- formula bar -->
<path d="M129.2 185.3 L132.7 179.5 L136.2 185.3 Z M129.2 191 L132.7 197 L136.2 191 Z" fill="#b4b4b4"/>
<path d="M157.4 184.2 L165.8 192.6 M165.8 184.2 L157.4 192.6" stroke="#5c5c5c" stroke-width="1.9"/>
<path d="M185 188.6 L189.3 192.8 L197.4 184.6" fill="none" stroke="#5c5c5c" stroke-width="1.9"/>
<path d="M1204 185 H1211.4 L1207.7 191.2 Z" fill="#a8a8a8"/>
<!-- sheet nav -->
<path d="M78.1 822.8 V833.1 L71 828 Z M94 822.8 V833.1 L101.1 828 Z" fill="#676767"/>
<path d="M504 822 V832 M499 827 H509" stroke="#c4c4c4" stroke-width="1.8"/>
<!-- accessibility icon -->
<g fill="none" stroke="#e6e6e6" stroke-width="1.1" stroke-linejoin="round" stroke-linecap="round">
<path d="M135.3 847.8 Q135.8 846 138.4 846.3 Q140.2 846.8 141.5 848.3 Q142.8 846.8 144.6 846.3 Q147.4 846 147.7 847.9 Q147.6 849.6 145.6 849.9 Q144.3 850.4 144.2 852.6"/>
<path d="M135.3 847.8 Q135.5 849.6 137.6 849.9 Q138.8 850.4 138.7 852.4 Q138.6 855 137.9 856.6 Q137.4 858.8 139.8 859"/>
<path d="M142.3 855.5 L145.5 858.7 L150.6 853.5"/>
</g>
<!-- status view icons -->
<g fill="none" stroke="#f0f0f0" stroke-width="1.1">
<rect x="908.5" y="845.6" width="12.4" height="11.6"/>
<path d="M912.6 845.6 V857.2 M916.7 845.6 V857.2 M908.5 849.5 H920.9 M908.5 853.3 H920.9"/>
<rect x="943.6" y="845.6" width="13" height="11.6" stroke-width="1.2"/>
<rect x="946.5" y="847.8" width="7" height="7.6" stroke-width="1.1"/>
<path d="M948.2 849.5 H951.8 M948.2 851.5 H951.8 M948.2 853.5 H951.8" stroke-width="0.9"/>
<rect x="979.6" y="845.6" width="13" height="11.6" stroke-width="1.2"/>
<path d="M979.6 852.8 H987.6 V845.6 M983.5 845.6 V852.8" stroke-width="1.1"/>
</g>
<path d="M1011.8 851 H1020.2 M1133.6 851 H1142.4 M1138 846.6 V855.4" stroke="#f0f0f0" stroke-width="1.7"/>
<path d="M208.2 147.6 H213.2 M204.8 156.6 H209.8 M210.8 147.6 L207.2 156.6" fill="none" stroke="#e0e0e0" stroke-width="1.1"/>
<path d="M61 222.9 L76 208 V222.9 Z" fill="#5a5a5a"/>

</svg>
</div></div>
<div id="frame"></div>
<div style="position:absolute;left:109px;top:805px;width:377px;height:41px;border:4px solid #ff2a22"></div>

</body></html>
